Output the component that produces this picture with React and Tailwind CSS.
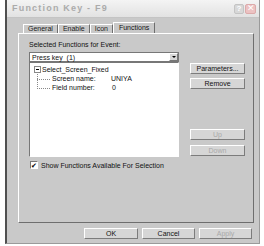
import React from 'react';

const font = { fontFamily: '"Liberation Sans", Arial, sans-serif' };

const Btn = ({ children, disabled, className = '' }) => (
  <div
    className={`flex items-center justify-center h-[11px] bg-[#d6d6d6] border border-t-white border-l-white border-b-[#7c7c7c] border-r-[#7c7c7c] text-[7px] leading-none ${
      disabled ? 'text-[#a9a9a9]' : 'text-[#111]'
    } ${className}`}
  >
    {children}
  </div>
);

const Tab = ({ children, active }) =>
  active ? (
    <div className="h-[11px] -mb-[1px] px-[5px] flex items-center bg-[#c9c9c9] border-t border-l border-white border-r border-r-[#6e6e6e] text-[7px] text-[#111] z-10">
      {children}
    </div>
  ) : (
    <div className="h-[9px] mt-[2px] px-[4px] flex items-center border-t border-l border-white border-r border-r-[#6e6e6e] text-[7px] text-[#222]">
      {children}
    </div>
  );

export default function App() {
  return (
    <div className="w-[264px] h-[246px] bg-white overflow-hidden" style={font}>
      <div className="ml-[5px] w-[255px] h-[244px] flex flex-col bg-[#c9c9c9] border-l-2 border-r border-b border-l-[#505050] border-r-[#9a9a9a] border-b-[#9a9a9a]">
        {/* Title bar */}
        <div className="h-[18px] flex items-center justify-between pl-[5px] pr-[3px] bg-gradient-to-b from-[#f4f4f4] to-[#e2e2e2] border-b border-[#c4c4c4]">
          <span className="text-[9px] font-bold tracking-[1.2px] text-[#ababab]">Function Key - F9</span>
          <div className="flex gap-[1px]">
            <div className="w-[10px] h-[10px] rounded-[2px] bg-[#d8d8d8] border border-[#c4c4c4] flex items-center justify-center text-[8px] font-bold text-white leading-none">?</div>
            <div className="w-[11px] h-[10px] rounded-[2px] bg-[#ecc2c2] border border-[#dcaaaa] flex items-center justify-center text-[9px] text-white leading-none">✕</div>
          </div>
        </div>

        {/* Tabs */}
        <div className="pl-[11px] pt-[4px] flex flex-col">
          <div className="flex pl-[5px] relative">
            <Tab>General</Tab>
            <Tab>Enable</Tab>
            <Tab>Icon</Tab>
            <Tab active>Functions</Tab>
          </div>

          {/* Panel */}
          <div className="w-[236px] h-[190px] border border-t-white border-l-white border-b-[#6e6e6e] border-r-[#6e6e6e] pl-[10px] pt-[7px]">
            <div className="text-[7px] text-[#111] leading-none h-[11px]">Selected Functions for Event:</div>
            <div className="flex">
              <div className="w-[150px] flex flex-col">
                <div className="h-[10px] bg-white border border-[#777] flex items-center justify-between pl-[2px]">
                  <span className="text-[7px] text-[#111] leading-none">Press key &nbsp;(1)</span>
                  <div className="w-[9px] h-[8px] bg-[#d6d6d6] border border-t-white border-l-white border-b-[#777] border-r-[#777] flex items-center justify-center">
                    <div className="w-0 h-0 border-l-[2px] border-r-[2px] border-t-[2px] border-l-transparent border-r-transparent border-t-black" />
                  </div>
                </div>
                <div className="relative h-[95px] bg-white border border-t-[#777] border-l-[#777] border-b-white border-r-white">
                  {/* tree lines */}
                  <div className="absolute left-[7px] top-[9px] h-[17px] border-l border-dotted border-[#888]" />
                  <div className="absolute left-[7px] top-[16px] w-[13px] border-t border-dotted border-[#888]" />
                  <div className="absolute left-[7px] top-[25px] w-[13px] border-t border-dotted border-[#888]" />
                  <div className="absolute left-[4px] top-[3px] w-[7px] h-[7px] bg-white border border-[#888] flex items-center justify-center">
                    <div className="w-[3px] border-t border-black" />
                  </div>
                  <div className="absolute left-[12px] top-[2px] text-[7px] text-[#111] leading-[9px]">Select_Screen_Fixed</div>
                  <div className="absolute left-[22px] top-[11px] text-[7px] text-[#111] leading-[9px] flex">
                    <span className="w-[59px]">Screen name:</span>
                    <span>UNIYA</span>
                  </div>
                  <div className="absolute left-[22px] top-[20px] text-[7px] text-[#111] leading-[9px] flex">
                    <span className="w-[60px]">Field number:</span>
                    <span>0</span>
                  </div>
                </div>
              </div>
              <div className="ml-[11px] w-[55px] flex flex-col pt-[11px]">
                <Btn>Parameters...</Btn>
                <Btn className="mt-[4px]">Remove</Btn>
                <Btn disabled className="mt-[40px]">Up</Btn>
                <Btn disabled className="mt-[5px]">Down</Btn>
              </div>
            </div>
            <div className="flex items-center mt-[4px] ml-[1px]">
              <div className="w-[8px] h-[8px] bg-white border border-t-[#777] border-l-[#777] border-b-white border-r-white flex items-center justify-center text-[7px] leading-none text-black">✔</div>
              <span className="ml-[3px] text-[7px] text-[#111] leading-none">Show Functions Available For Selection</span>
            </div>
          </div>

          {/* Bottom buttons */}
          <div className="flex mt-[5px] pl-[66px] gap-[4px]">
            <Btn className="w-[54px]">OK</Btn>
            <Btn className="w-[53px]">Cancel</Btn>
            <Btn disabled className="w-[53px]">Apply</Btn>
          </div>
        </div>
      </div>
    </div>
  );
}
